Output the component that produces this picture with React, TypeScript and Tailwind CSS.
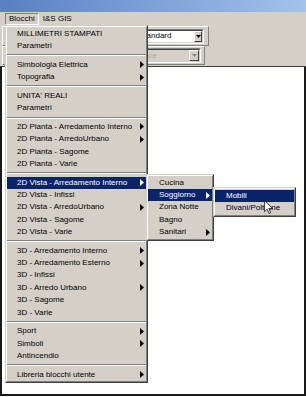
import React from "react";

type Item = { label?: string; sub?: boolean; active?: boolean; sep?: boolean };

const mainItems: Item[] = [
  { label: "MILLIMETRI STAMPATI" },
  { label: "Parametri" },
  { sep: true },
  { label: "Simbologia Elettrica", sub: true },
  { label: "Topografia", sub: true },
  { sep: true },
  { label: "UNITA' REALI" },
  { label: "Parametri" },
  { sep: true },
  { label: "2D Pianta - Arredamento Interno", sub: true },
  { label: "2D Pianta - ArredoUrbano", sub: true },
  { label: "2D Pianta - Sagome" },
  { label: "2D Pianta - Varie" },
  { sep: true },
  { label: "2D Vista - Arredamento Interno", sub: true, active: true },
  { label: "2D Vista - Infissi" },
  { label: "2D Vista - ArredoUrbano", sub: true },
  { label: "2D Vista - Sagome" },
  { label: "2D Vista - Varie" },
  { sep: true },
  { label: "3D - Arredamento Interno", sub: true },
  { label: "3D - Arredamento Esterno", sub: true },
  { label: "3D - Infissi" },
  { label: "3D - Arredo Urbano", sub: true },
  { label: "3D - Sagome" },
  { label: "3D - Varie" },
  { sep: true },
  { label: "Sport", sub: true },
  { label: "Simboli", sub: true },
  { label: "Antincendio" },
  { sep: true },
  { label: "Libreria blocchi utente", sub: true },
];

const vistaItems: Item[] = [
  { label: "Cucina" },
  { label: "Soggiorno", sub: true, active: true },
  { label: "Zona Notte" },
  { label: "Bagno" },
  { label: "Sanitari", sub: true },
];

const soggiornoItems: Item[] = [
  { label: "Mobili", active: true },
  { label: "Divani/Poltrone" },
];

const Arrow = ({ light }: { light?: boolean }) => (
  <svg width="4" height="7" viewBox="0 0 4 7" className="shrink-0">
    <path d="M0 0 L4 3.5 L0 7 Z" fill={light ? "#ffffff" : "#000000"} />
  </svg>
);

// raised win2k frame around a popup
const Popup = ({
  items,
  className,
  padL,
}: {
  items: Item[];
  className: string;
  padL: string;
}) => (
  <div
    className={`absolute border border-t-[#d4d0c8] border-l-[#d4d0c8] border-r-[#404040] border-b-[#404040] ${className}`}
  >
    <div className="h-full border border-t-white border-l-white border-r-[#808080] border-b-[#808080] bg-[#d4d0c8] py-[0.5px]">
      {items.map((it, i) =>
        it.sep ? (
          <div key={i} className="h-[6.4px] flex items-center">
            <div className="w-full h-[2px] border-t border-t-[#808080] border-b border-b-white" />
          </div>
        ) : (
          <div
            key={i}
            className={`h-[12.35px] flex items-center justify-between pr-[2px] ${padL} ${
              it.active ? "bg-[#0a246a] text-white" : "text-black"
            }`}
          >
            <span className="whitespace-nowrap leading-none">{it.label}</span>
            {it.sub && <Arrow light={it.active} />}
          </div>
        )
      )}
    </div>
  </div>
);

const Combo = ({
  text,
  disabled,
  width,
  btn,
}: {
  text: string;
  disabled?: boolean;
  width: string;
  btn: string;
}) => (
  <div
    className={`${width} h-[15px] flex border border-t-[#808080] border-l-[#808080] border-r-white border-b-white`}
  >
    <div
      className={`flex-1 flex items-center border border-t-[#404040] border-l-[#404040] border-r-[#d4d0c8] border-b-[#d4d0c8] ${
        disabled ? "bg-[#d4d0c8]" : "bg-white"
      }`}
    >
      <span
        className={`flex-1 pl-[2px] leading-none whitespace-nowrap overflow-hidden ${
          disabled ? "text-[#a8a8a8]" : "text-black"
        }`}
      >
        {text}
      </span>
      <div
        className={`${btn} h-full flex items-center justify-center bg-[#d4d0c8] border border-t-white border-l-white border-r-[#404040] border-b-[#404040]`}
      >
        <svg width="5" height="3" viewBox="0 0 5 3">
          <path d="M0 0 L5 0 L2.5 3 Z" fill={disabled ? "#808080" : "#000"} />
        </svg>
      </div>
    </div>
  </div>
);

export default function App() {
  return (
    <div
      className="relative w-[306px] h-[397px] overflow-hidden bg-white flex flex-col text-[8px]"
      style={{ fontFamily: '"Liberation Sans", Arial, sans-serif' }}
    >
      {/* title bar */}
      <div className="h-[12px] bg-gradient-to-r from-[#5a7fc2] to-[#a3c3ec]" />
      <div className="h-px bg-[#d4d0c8]" />

      {/* menu bar */}
      <div className="h-[12px] bg-[#d4d0c8] flex items-stretch pl-[5px] gap-[3px]">
        <div className="px-[3px] flex items-center border border-t-[#808080] border-l-[#808080] border-r-white border-b-white">
          Blocchi
        </div>
        <div className="px-[1px] flex items-center">I&amp;S GIS</div>
      </div>

      {/* toolbar */}
      <div className="h-[42px] bg-[#d4d0c8] border-b border-b-[#404040] flex flex-col pt-[1px] pl-[2px]">
        <div className="h-[20px] flex items-center pl-[132px] w-[207px] border border-t-white border-l-white border-r-[#808080] border-b-[#808080]">
          <Combo text="Standard" width="w-[69px]" btn="w-[8px]" />
        </div>
        <div className="h-[19px] flex items-center pl-[132px] w-[203px] border border-t-white border-l-white border-r-[#808080] border-b-[#808080]">
          <Combo text="Voce" disabled width="w-[66px]" btn="w-[10px]" />
        </div>
      </div>

      {/* drawing area */}
      <div className="flex-1 border-l-2 border-r-2 border-b-2 border-[#1a1a1a] bg-white mb-[1px]" />

      {/* open menus */}
      <Popup items={mainItems} className="left-[5px] top-[25px] w-[143px]" padL="pl-[10px]" />
      <Popup items={vistaItems} className="left-[146px] top-[174px] w-[68px]" padL="pl-[11px]" />
      <Popup items={soggiornoItems} className="left-[213px] top-[187px] w-[83px]" padL="pl-[11px]" />

      {/* mouse pointer */}
      <svg
        className="absolute left-[264px] top-[200px]"
        width="9"
        height="14"
        viewBox="0 0 12 19"
      >
        <path
          d="M0.5 0.5 L0.5 16 L4.2 12.5 L6.8 18.3 L9 17.3 L6.5 11.6 L11.5 11.6 Z"
          fill="#fff"
          stroke="#000"
          strokeWidth="1"
        />
      </svg>
    </div>
  );
}
